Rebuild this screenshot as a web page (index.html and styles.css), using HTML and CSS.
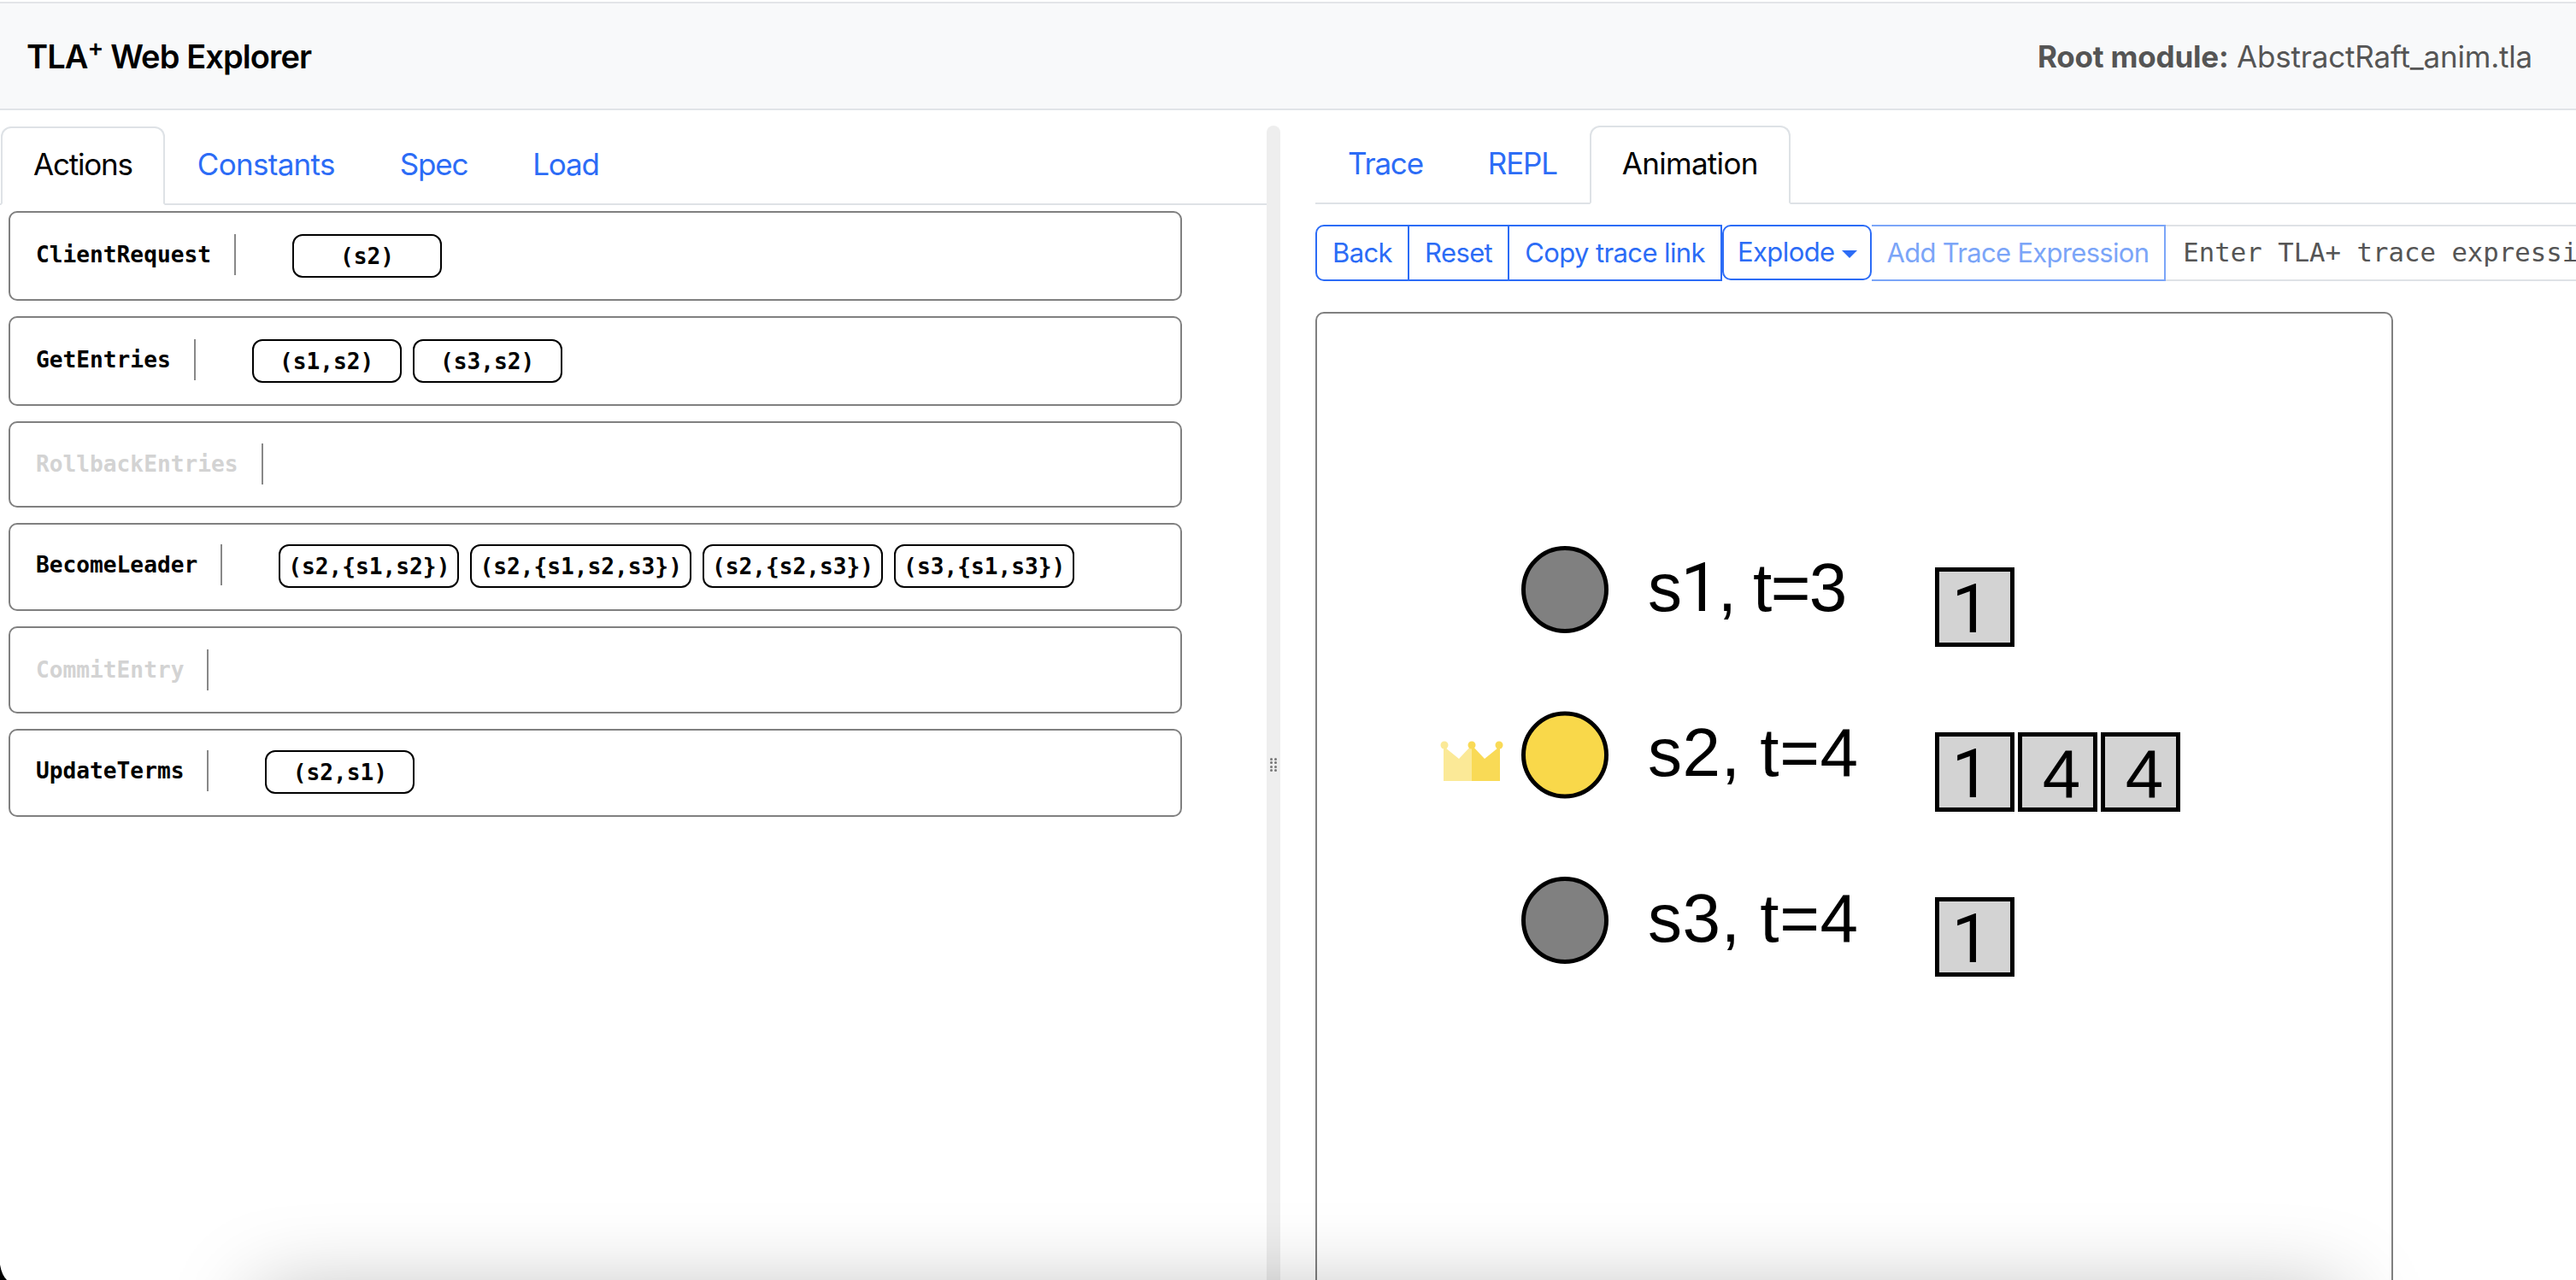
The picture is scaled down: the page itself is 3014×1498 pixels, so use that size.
FILE: index.html
```html
<!DOCTYPE html>
<html lang="en">
<head>
<meta charset="utf-8">
<title>TLA+ Web Explorer</title>
<link rel="stylesheet" href="styles.css">
</head>
<body>
<div class="app">
  <header class="topbar">
    <div class="brand">TLA<sup class="plus">+</sup> Web Explorer</div>
    <div class="root-module"><b>Root module:</b> AbstractRaft_anim.tla</div>
  </header>
  <main class="panes">
    <section class="pane-left">
      <nav class="tabs">
        <a class="tab active tight">Actions</a>
        <a class="tab">Constants</a>
        <a class="tab tight">Spec</a>
        <a class="tab tight">Load</a>
      </nav>
      <div class="actions">
        <div class="card tall">
          <span class="name">ClientRequest</span><span class="divider"></span>
          <div class="params"><button class="param">(s2)</button></div>
        </div>
        <div class="card tall">
          <span class="name">GetEntries</span><span class="divider"></span>
          <div class="params"><button class="param">(s1,s2)</button><button class="param">(s3,s2)</button></div>
        </div>
        <div class="card empty-a">
          <span class="name off">RollbackEntries</span><span class="divider"></span>
        </div>
        <div class="card mid">
          <span class="name">BecomeLeader</span><span class="divider"></span>
          <div class="params"><button class="param">(s2,{s1,s2})</button><button class="param">(s2,{s1,s2,s3})</button><button class="param">(s2,{s2,s3})</button><button class="param">(s3,{s1,s3})</button></div>
        </div>
        <div class="card empty-b">
          <span class="name off">CommitEntry</span><span class="divider"></span>
        </div>
        <div class="card mid">
          <span class="name">UpdateTerms</span><span class="divider"></span>
          <div class="params"><button class="param">(s2,s1)</button></div>
        </div>
      </div>
    </section>
    <div class="gutter">
      <div class="grip"><i></i><i></i><i></i><i></i><i></i><i></i><i></i><i></i></div>
    </div>
    <section class="pane-right">
      <nav class="tabs">
        <a class="tab tight">Trace</a>
        <a class="tab tight">REPL</a>
        <a class="tab active">Animation</a>
      </nav>
      <div class="toolbar">
        <button class="btn first">Back</button>
        <button class="btn">Reset</button>
        <button class="btn">Copy trace link</button>
        <button class="btn explode">Explode<span class="caret"></span></button>
        <button class="btn muted">Add Trace Expression</button>
        <input class="trace-input" type="text" placeholder="Enter TLA+ trace expression">
      </div>
      <div class="stage">
        <svg class="anim" viewBox="1541 366 1257 1140" width="1257" height="1140" xmlns="http://www.w3.org/2000/svg">
          <g class="crown">
            <path class="crown-l" d="M1689 913V874h2l16 13 15-16V913Z"/>
            <circle class="crown-l" cx="1690" cy="871" r="4.5"/>
            <path class="crown-r" d="M1722 913V871l15 16 16-13h2V913Z"/>
            <circle class="crown-r" cx="1722" cy="871" r="4.5"/>
            <circle class="crown-r" cx="1754" cy="871" r="4.5"/>
          </g>
          <circle class="node" cx="1831" cy="689" r="48.5"/>
          <circle class="node leader" cx="1831" cy="882.5" r="48.5"/>
          <circle class="node" cx="1831" cy="1076" r="48.5"/>
          <text class="label squeezed" x="1928" y="714">s<tspan class="one">1</tspan>, t=3</text>
          <text class="label wide" x="1928" y="907">s2, t=4</text>
          <text class="label wide" x="1928" y="1101">s3, t=4</text>
          <rect class="entry" x="2266.5" y="665.5" width="88" height="88"/>
          <text class="digit one" x="2306" y="739">1</text>
          <rect class="entry" x="2266.5" y="858.5" width="88" height="88"/>
          <text class="digit one" x="2306" y="932">1</text>
          <rect class="entry" x="2363.5" y="858.5" width="88" height="88"/>
          <text class="digit" x="2412" y="932">4</text>
          <rect class="entry" x="2460.5" y="858.5" width="88" height="88"/>
          <text class="digit" x="2509" y="932">4</text>
          <rect class="entry" x="2266.5" y="1051.5" width="88" height="88"/>
          <text class="digit one" x="2306" y="1125">1</text>
        </svg>
      </div>
    </section>
  </main>
  <div class="edge-shadow"></div>
  <div class="window-corner"></div>
</div>
</body>
</html>
```
FILE: styles.css
```css
* { box-sizing: border-box; }
html, body { margin: 0; padding: 0; background: #fff; }
body { font-family: Inter, "Liberation Sans", sans-serif; color: #000; }

.app {
  position: relative;
  width: 3014px;
  height: 1498px;
  overflow: hidden;
  display: flex;
  flex-direction: column;
  padding-top: 2px;
}

.topbar {
  flex: none;
  height: 127px;
  display: flex;
  align-items: center;
  justify-content: space-between;
  padding: 0 51px 0 31px;
  background: #f8f9fa;
  border-top: 2px solid #e3e5e8;
  border-bottom: 2px solid #e1e4e8;
}
.brand { font-size: 38px; font-weight: 600; letter-spacing: -0.9px; color: #000; }
.plus { font-size: 28px; line-height: 0; }
.root-module { font-size: 35px; color: #555; letter-spacing: -0.2px; }
.root-module b { font-weight: 700; }

.panes { flex: 1; min-height: 0; display: flex; }
.pane-left { flex: none; width: 1482px; padding-top: 19px; }
.pane-right { flex: none; width: 1516px; padding: 18px 0 0 41px; margin-right: -100px; min-width: 0; }

.gutter {
  flex: none;
  width: 16px;
  margin-top: 18px;
  padding: 740px 0 0 4px;
  background: #eee;
  border-radius: 8px 8px 0 0;
}
.grip { display: grid; grid-template-columns: 3px 3px; column-gap: 2px; row-gap: 1.4px; }
.grip i { width: 3px; height: 3px; background: #777; border-radius: 50%; }

.tabs {
  display: flex;
  height: 92px;
  padding-left: 1px;
  border-bottom: 2px solid #dee2e6;
}
.pane-right .tabs { padding-left: 0; }
.tab {
  display: flex;
  align-items: center;
  height: 92px;
  padding: 0 36px 4px;
  border: 2px solid transparent;
  border-radius: 12px 12px 0 0;
  font-size: 35px;
  letter-spacing: -0.7px;
  color: #2c6cf6;
}
.tab.tight { letter-spacing: -1.2px; }
.tab.active {
  color: #000;
  background: #fff;
  border-color: #dee2e6 #dee2e6 #fff;
}

.actions { padding: 7px 0 0 10px; display: flex; flex-direction: column; gap: 18px; }
.card {
  width: 1373px;
  display: flex;
  align-items: flex-start;
  padding-left: 30px;
  border: 2px solid #808080;
  border-radius: 10px;
  font-family: "DejaVu Sans Mono", "Liberation Mono", monospace;
}
.tall { height: 105px; padding-top: 25px; }
.mid { height: 103px; padding-top: 23px; }
.empty-a { height: 101px; padding-top: 24px; }
.empty-b { height: 102px; padding-top: 25px; }

.name { font-size: 26.2px; font-weight: 700; line-height: 48px; }
.name.off { color: #d3d3d3; }
.divider { flex: none; width: 2px; height: 48px; margin: 0 66px 0 27px; background: #888; }
.params { display: flex; gap: 13px; }
.param {
  min-width: 175px;
  height: 51px;
  padding: 0 9px;
  background: #fff;
  border: 2px solid #000;
  border-radius: 12px;
  font: 700 26.2px "DejaVu Sans Mono", "Liberation Mono", monospace;
  color: #000;
}

.toolbar { display: flex; align-items: flex-start; margin-top: 24px; height: 66px; }
.btn {
  flex: none;
  height: 66px;
  padding: 0 18px 2px;
  background: #fff;
  border: 2px solid #2c6cf6;
  border-left-width: 0;
  font: 400 31px Inter, "Liberation Sans", sans-serif;
  letter-spacing: -0.6px;
  color: #2c6cf6;
}
.btn.first { border-left-width: 2px; border-radius: 10px 0 0 10px; }
.btn.explode {
  height: 65px;
  padding: 0 15px 2px 16px;
  border-left-width: 2px;
  border-radius: 10px;
}
.caret {
  display: inline-block;
  margin-left: 8px;
  vertical-align: middle;
  border-top: 9px solid #2c6cf6;
  border-left: 9px solid transparent;
  border-right: 9px solid transparent;
}
.btn.muted { padding: 0 18px 2px; letter-spacing: -0.7px; border-color: #7ba5f8; color: #7ba5f8; }
.trace-input {
  flex: none;
  width: 900px;
  height: 66px;
  padding: 0 20px 2px;
  border: 2px solid #dee2e6;
  border-left-width: 0;
  outline: 0;
  font: 400 30.7px "DejaVu Sans Mono", "Liberation Mono", monospace;
  color: #555;
}
.trace-input::placeholder { color: #555; opacity: 1; }

.stage {
  width: 1261px;
  height: 1200px;
  margin-top: 36px;
  border: 2px solid #808080;
  border-radius: 10px;
}
.anim { display: block; }
.crown-l { fill: #fbe997; }
.crown-r { fill: #f9da56; }
.node { fill: #808080; stroke: #000; stroke-width: 5; }
.node.leader { fill: #f9d84a; }
.label { font: 400 80px "Liberation Sans", Arial, sans-serif; fill: #000; }
.label.squeezed { letter-spacing: -1.6px; }
.label.wide { letter-spacing: 0.6px; }
.entry { fill: #d3d3d3; stroke: #000; stroke-width: 5; }
.digit { font: 400 80px "Liberation Sans", Arial, sans-serif; fill: #000; text-anchor: middle; }
.one { font-family: Roboto, "Liberation Sans", sans-serif; }

.edge-shadow {
  position: absolute;
  left: 300px;
  top: 1513px;
  width: 2440px;
  height: 200px;
  box-shadow: 0 0 100px rgba(0, 0, 0, 0.27);
  pointer-events: none;
}
.window-corner {
  position: absolute;
  left: 0;
  bottom: 0;
  width: 8px;
  height: 18px;
  background: #000;
  clip-path: path("M0 0 Q2 12 8 18 L0 18 Z");
}
```
